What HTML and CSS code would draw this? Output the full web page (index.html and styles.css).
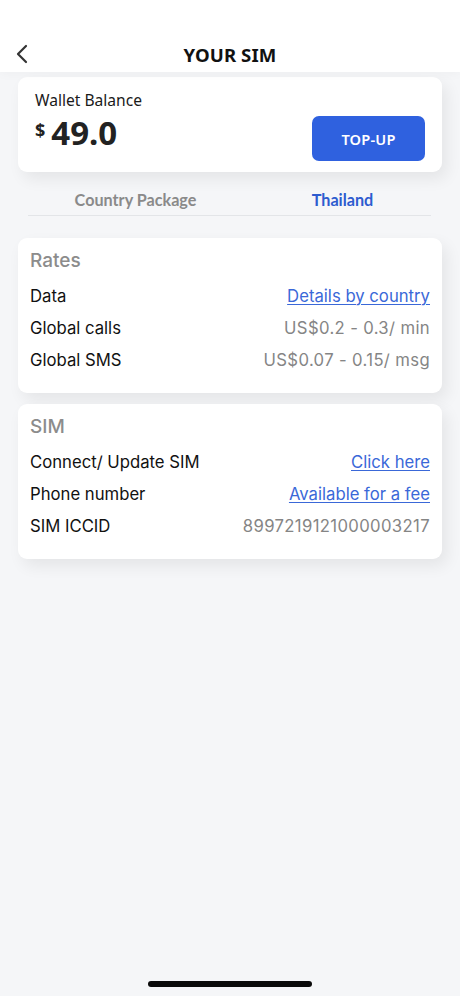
FILE: index.html
```html
<!DOCTYPE html>
<html lang="en">
<head>
<meta charset="utf-8">
<title>Your SIM</title>
<link rel="stylesheet" href="styles.css">
</head>
<body>
<div class="screen">
  <header class="topbar">
    <button class="back" aria-label="Back">
      <svg width="14" height="20" viewBox="0 0 14 20"><path d="M11 2 L3 10 L11 18" fill="none" stroke="#333" stroke-width="2.2" stroke-linecap="round" stroke-linejoin="round"/></svg>
    </button>
    <h1 class="title">YOUR SIM</h1>
  </header>

  <main class="content">
    <section class="card wallet">
      <div class="wallet-info">
        <div class="wallet-label">Wallet Balance</div>
        <div class="wallet-amount"><span class="cur">$</span><span class="num">49.0</span></div>
      </div>
      <button class="topup">TOP-UP</button>
    </section>

    <div class="tabs">
      <div class="tab">Country Package</div>
      <div class="tab active">Thailand</div>
    </div>

    <section class="card list">
      <h2 class="list-title">Rates</h2>
      <div class="row"><span class="label">Data</span><a class="link" href="#">Details by country</a></div>
      <div class="row"><span class="label">Global calls</span><span class="value">US$0.2 - 0.3/ min</span></div>
      <div class="row"><span class="label">Global SMS</span><span class="value">US$0.07 - 0.15/ msg</span></div>
    </section>

    <section class="card list">
      <h2 class="list-title">SIM</h2>
      <div class="row"><span class="label">Connect/ Update SIM</span><a class="link" href="#">Click here</a></div>
      <div class="row"><span class="label">Phone number</span><a class="link" href="#">Available for a fee</a></div>
      <div class="row"><span class="label">SIM ICCID</span><span class="value">8997219121000003217</span></div>
    </section>
  </main>

  <div class="home-bar"></div>
</div>
</body>
</html>
```

FILE: styles.css
```css
* { box-sizing: border-box; }
html, body { margin: 0; padding: 0; }
body {
  background: #f5f6f8;
  font-family: "Noto Sans", "Open Sans", sans-serif;
  color: #111;
}
.screen {
  min-height: 996px;
  display: flex;
  flex-direction: column;
}
.topbar {
  background: #fff;
  height: 72px;
  padding-top: 36px;
  display: flex;
  align-items: center;
  justify-content: center;
  position: relative;
  box-shadow: 0 2px 10px rgba(0,0,0,0.03);
}
.back {
  position: absolute;
  left: 12px;
  top: 43px;
  border: 0;
  background: none;
  padding: 0;
  width: 20px;
  height: 22px;
  display: flex;
  align-items: center;
  justify-content: center;
}
.title {
  margin: 0;
  font-size: 18.6px;
  font-weight: 700;
  letter-spacing: 0.1px;
  color: #111;
}
.content {
  padding: 5px 18px 0;
  display: flex;
  flex-direction: column;
}
.card {
  background: #fff;
  border-radius: 9px;
  box-shadow: 5px 7px 16px rgba(0,0,0,0.07);
}
.wallet {
  height: 95px;
  padding: 12px 17px 11px 17px;
  display: flex;
  align-items: flex-end;
  justify-content: space-between;
}
.wallet-info {
  align-self: stretch;
  display: flex;
  flex-direction: column;
}
.wallet-label {
  font-size: 15.6px;
  color: #1a1a1a;
  line-height: 22px;
}
.wallet-amount {
  display: flex;
  align-items: flex-start;
  margin-top: 2px;
}
.cur {
  font-size: 18px;
  font-weight: 700;
  color: #222;
  margin-top: 5px;
  margin-right: 6px;
}
.num {
  font-size: 33px;
  font-weight: 700;
  line-height: 40px;
  color: #222;
}
.topup {
  width: 113px;
  height: 45px;
  border: 0;
  border-radius: 7px;
  background: #2f61df;
  color: #fff;
  font-family: "Noto Sans", sans-serif;
  font-size: 14.6px;
  font-weight: 600;
  letter-spacing: 0.2px;
}
.tabs {
  margin: 14px 11px 0 10px;
  padding-left: 4px;
  display: grid;
  grid-template-columns: 207px 207px;
  border-bottom: 1px solid #e3e5e8;
  height: 30px;
}
.tab {
  text-align: center;
  font-family: Lato, "Noto Sans", sans-serif;
  font-size: 16.2px;
  font-weight: 700;
  color: #8a8a8a;
  line-height: 28px;
  white-space: nowrap;
}
.tab.active { color: #2d5ccf; }
.list {
  margin-top: 22px;
  padding: 10px 12px 17px;
  font-family: Inter, "Liberation Sans", sans-serif;
}
.list + .list { margin-top: 11px; }
.list-title {
  margin: 0 0 6px;
  font-size: 19px;
  font-weight: 500;
  color: #8c8c8c;
  line-height: 26px;
}
.row {
  display: flex;
  justify-content: space-between;
  align-items: baseline;
  font-size: 16.7px;
  line-height: 32px;
}
.label { color: #111; }
.value { color: #858585; letter-spacing: 0.35px; }
.link {
  color: #3a68d8;
  text-decoration: underline;
  text-underline-offset: 2px;
  text-decoration-thickness: 1px;
}
.home-bar {
  margin: auto auto 9px;
  width: 164px;
  height: 6px;
  border-radius: 3px;
  background: #0a0a0a;
}
```
